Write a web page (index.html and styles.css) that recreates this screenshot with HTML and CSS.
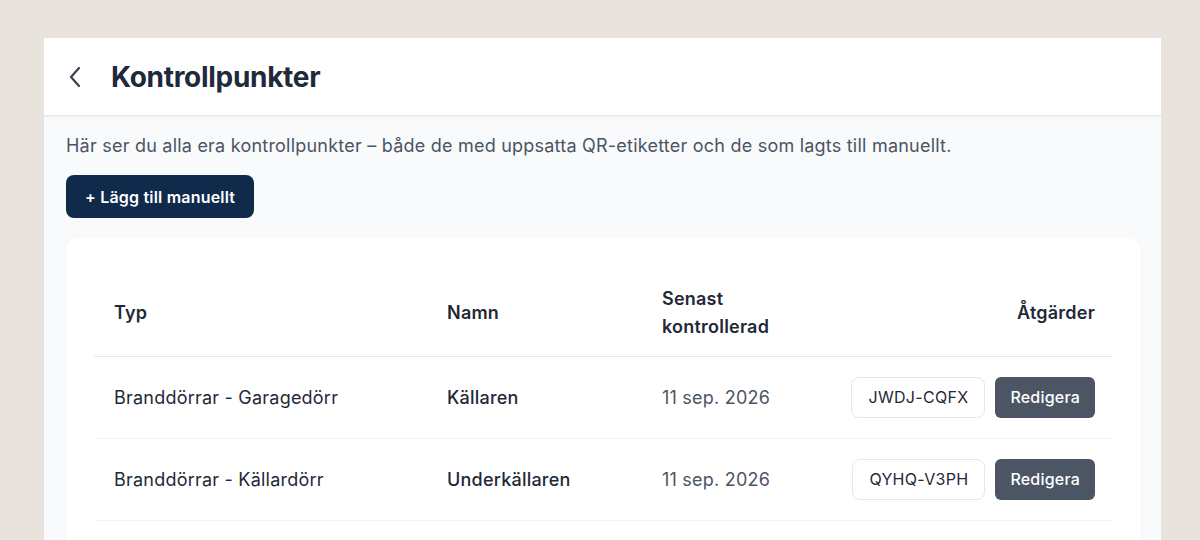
FILE: index.html
```html
<!DOCTYPE html>
<html lang="sv">
<head>
<meta charset="utf-8">
<title>Kontrollpunkter</title>
<link rel="stylesheet" href="styles.css">
</head>
<body>
<div class="panel">
  <header class="topbar">
    <a class="back" href="#" aria-label="Tillbaka">
      <svg width="14" height="22" viewBox="0 0 14 22" fill="none" stroke="#374151" stroke-width="2.2" stroke-linecap="round" stroke-linejoin="round"><path d="M11 2 L3 11 L11 20"/></svg>
    </a>
    <h1 class="title">Kontrollpunkter</h1>
  </header>
  <main class="content">
    <p class="intro">Här ser du alla era kontrollpunkter – både de med uppsatta QR-etiketter och de som lagts till manuellt.</p>
    <button class="btn-primary">+ Lägg till manuellt</button>
    <section class="card">
      <table class="table">
        <colgroup>
          <col class="c-typ"><col class="c-namn"><col class="c-date"><col class="c-act">
        </colgroup>
        <thead>
          <tr>
            <th>Typ</th>
            <th>Namn</th>
            <th>Senast<br>kontrollerad</th>
            <th class="right">Åtgärder</th>
          </tr>
        </thead>
        <tbody>
          <tr>
            <td>Branddörrar - Garagedörr</td>
            <td class="name">Källaren</td>
            <td class="date">11 sep. 2026</td>
            <td class="right"><div class="actions"><span class="code">JWDJ-CQFX</span><button class="btn-edit">Redigera</button></div></td>
          </tr>
          <tr>
            <td>Branddörrar - Källardörr</td>
            <td class="name">Underkällaren</td>
            <td class="date">11 sep. 2026</td>
            <td class="right"><div class="actions"><span class="code">QYHQ-V3PH</span><button class="btn-edit">Redigera</button></div></td>
          </tr>
        </tbody>
      </table>
    </section>
  </main>
</div>
</body>
</html>
```
FILE: styles.css
```css
* { box-sizing: border-box; }
html, body { margin: 0; height: 100%; }
body {
  background: #e8e3dc;
  font-family: Inter, "Noto Sans", sans-serif;
  color: #1f2937;
  padding: 38px 39px 0 44px;
  overflow: hidden;
}
.panel {
  background: #f8fafc;
  height: 100%;
  display: flex;
  flex-direction: column;
  overflow: hidden;
}
.topbar {
  flex-shrink: 0;
  background: #fff;
  height: 78px;
  display: flex;
  align-items: center;
  padding-left: 24px;
  gap: 29px;
  border-bottom: 1px solid #e5e7eb;
  box-shadow: 0 1px 3px rgba(15, 23, 42, 0.06);
}
.back { display: flex; align-items: center; }
.title {
  margin: 0;
  font-size: 28px;
  font-weight: 700;
  color: #1e293b;
  letter-spacing: -0.3px;
}
.content {
  flex: 1;
  min-height: 0;
  padding: 18px 20px 0 22px;
  display: flex;
  flex-direction: column;
  align-items: flex-start;
}
.intro {
  margin: 0 0 17px;
  font-size: 18px;
  letter-spacing: 0.22px;
  line-height: 24px;
  color: #4b5563;
}
.btn-primary {
  flex-shrink: 0;
  background: #0f2a4b;
  color: #fff;
  border: 0;
  border-radius: 8px;
  height: 43px;
  padding: 0 19px;
  font-family: inherit;
  font-size: 16px;
  letter-spacing: 0.2px;
  font-weight: 600;
}
.card {
  flex: 1;
  margin-top: 20px;
  width: 100%;
  background: #fff;
  border-radius: 12px 12px 0 0;
  padding: 32px 28px 0;
  box-shadow: 0 1px 3px rgba(15, 23, 42, 0.05);
}
.table {
  width: 100%;
  border-collapse: collapse;
  table-layout: fixed;
}
.c-typ { width: 333px; }
.c-namn { width: 215px; }
.c-date { width: 160px; }
th, td {
  text-align: left;
  padding: 0 18px 0 20px;
  font-size: 18px;
  letter-spacing: 0.22px;
}
th {
  font-weight: 600;
  color: #1f2937;
  height: 86px;
  line-height: 28px;
  border-bottom: 1px solid #e5e7eb;
}
td {
  height: 82px;
  color: #1f2937;
  border-bottom: 1px solid #f1f3f5;
}
td.name { font-weight: 500; }
td.date { color: #4b5563; }
.right { text-align: right; }
.actions {
  display: flex;
  justify-content: flex-end;
  gap: 10px;
}
.code {
  display: inline-flex;
  align-items: center;
  height: 41px;
  padding: 0 16px;
  border: 1px solid #e5e7eb;
  border-radius: 8px;
  font-size: 16px;
  letter-spacing: 0.3px;
  color: #1f2937;
}
.btn-edit {
  height: 41px;
  padding: 0 15px;
  background: #4b5563;
  color: #fff;
  border: 0;
  border-radius: 6px;
  font-family: inherit;
  font-size: 16px;
  letter-spacing: 0.2px;
  font-weight: 500;
}
```
